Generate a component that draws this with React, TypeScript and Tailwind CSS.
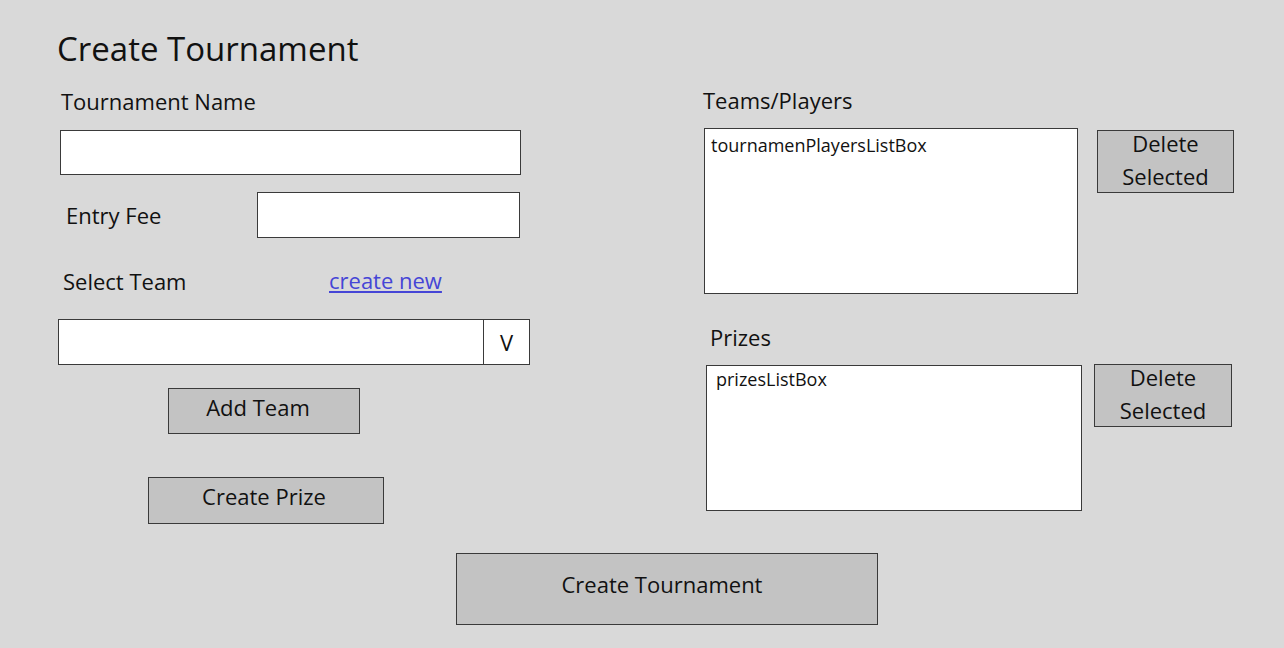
const font = { fontFamily: '"Open Sans", "Noto Sans", sans-serif' };

const Btn = ({ label, className }: { label: React.ReactNode; className: string }) => (
  <button className={`bg-[#c3c3c3] border border-[#3a3a3a] text-[#111] text-[22px] leading-[32px] ${className}`}>
    {label}
  </button>
);

const ListBox = ({ text, className }: { text: string; className: string }) => (
  <div className={`bg-white border border-[#3a3a3a] text-[18px] leading-[24px] text-[#111] ${className}`}>{text}</div>
);

const DeleteLabel = () => (
  <span className="block -mt-[4px] leading-[33px]">
    Delete
    <br />
    Selected
  </span>
);

export default function App() {
  return (
    <div className="w-[1284px] h-[648px] bg-[#d9d9d9] overflow-hidden text-[#111]" style={font}>
      <div className="flex items-start">
        {/* left side */}
        <div className="flex flex-col w-[645px] pl-[58px]">
          <h1 className="text-[33px] leading-[40px] mt-[29px] -ml-[1px] font-normal">Create Tournament</h1>
          <div className="text-[22px] leading-[30px] ml-[3px] mt-[17px]">Tournament Name</div>
          <div className="w-[461px] h-[45px] bg-white border border-[#3a3a3a] ml-[2px] mt-[14px]" />
          <div className="flex items-center mt-[17px]">
            <span className="text-[22px] leading-[30px] ml-[8px] w-[191px]">Entry Fee</span>
            <div className="w-[263px] h-[46px] bg-white border border-[#3a3a3a]" />
          </div>
          <div className="flex items-center mt-[28px] h-[30px]">
            <span className="text-[22px] leading-[30px] ml-[5px] w-[266px]">Select Team</span>
            <a href="#" className="text-[22px] leading-[30px] text-[#4545d6] underline -mt-[3px]">create new</a>
          </div>
          <div className="flex w-[472px] h-[46px] bg-white border border-[#3a3a3a] mt-[23px]">
            <div className="flex-1" />
            <div className="w-[46px] border-l border-[#3a3a3a] flex items-center justify-center text-[22px]">V</div>
          </div>
          <Btn label="Add Team" className="w-[192px] h-[46px] ml-[110px] mt-[23px] pb-[8px] pr-[12px]" />
          <Btn label="Create Prize" className="w-[236px] h-[47px] ml-[90px] mt-[43px] pb-[10px] pr-[4px]" />
        </div>

        {/* right side */}
        <div className="flex flex-col pl-[58px]">
          <div className="text-[22px] leading-[30px] mt-[85px]">Teams/Players</div>
          <div className="flex items-start mt-[13px]">
            <ListBox text="tournamenPlayersListBox" className="w-[374px] h-[166px] ml-[1px] px-[6px] pt-[4px]" />
            <Btn label={<DeleteLabel />} className="w-[137px] h-[63px] ml-[19px] mt-[2px]" />
          </div>
          <div className="text-[22px] leading-[30px] ml-[7px] mt-[28px]">Prizes</div>
          <div className="flex items-start mt-[13px]">
            <ListBox text="prizesListBox" className="w-[376px] h-[146px] ml-[3px] px-[9px] pt-[1px]" />
            <Btn label={<DeleteLabel />} className="w-[138px] h-[63px] ml-[12px] -mt-[1px]" />
          </div>
        </div>
      </div>

      <Btn label="Create Tournament" className="w-[422px] h-[72px] ml-[456px] mt-[29px] pb-[10px] pr-[10px]" />
    </div>
  );
}
